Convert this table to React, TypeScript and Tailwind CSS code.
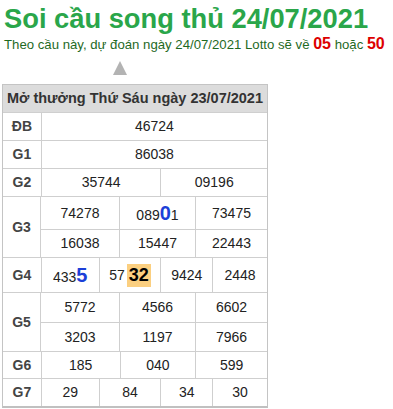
import React from 'react';

const font = { fontFamily: '"Liberation Sans", Arial, sans-serif' };

const Cell: React.FC<{ w: number; children?: React.ReactNode; last?: boolean }> = ({ w, children, last }) => (
    <div
        className={`flex items-center justify-center text-[14px] text-[#222] ${last ? '' : 'border-r border-[#cfcfcf]'}`}
        style={{ width: w }}
    >
        {children}
    </div>
);

const Row: React.FC<{ label: string; h: number; cols: number[]; values: React.ReactNode[] }> = ({ label, h, cols, values }) => (
    <div className="flex border-b border-[#cfcfcf]" style={{ height: h }}>
        <div className="w-[39px] flex items-center justify-center border-r border-[#cfcfcf] font-bold text-[14px] text-[#444]">
            {label}
        </div>
        {values.map((v, i) => (
            <Cell key={i} w={cols[i]} last={i === values.length - 1}>{v}</Cell>
        ))}
    </div>
);

const DoubleRow: React.FC<{ label: string; heights: number[]; cols: number[]; rows: React.ReactNode[][] }> = ({ label, heights, cols, rows }) => (
    <div className="flex border-b border-[#cfcfcf]">
        <div className="w-[39px] flex items-center justify-center border-r border-[#cfcfcf] font-bold text-[14px] text-[#444]">
            {label}
        </div>
        <div className="flex flex-col">
            {rows.map((r, ri) => (
                <div
                    key={ri}
                    className={`flex ${ri === 0 ? 'border-b border-[#cfcfcf]' : ''}`}
                    style={{ height: heights[ri] }}
                >
                    {r.map((v, i) => (
                        <Cell key={i} w={cols[i]} last={i === r.length - 1}>{v}</Cell>
                    ))}
                </div>
            ))}
        </div>
    </div>
);

const three = [79, 76, 71];
const four = [58, 62, 52, 54];

export default function App() {
    return (
        <div className="w-[393px] h-[409px] bg-white overflow-hidden" style={font}>
            <div className="pl-[4px] pt-[3px]">
                <h1 className="text-[27.3px] leading-[31px] font-bold text-[#2aa64a]">Soi cầu song thủ 24/07/2021</h1>
                <p className="text-[13.2px] leading-[18px] text-[#1f6a1f] mt-[1px]">
                    Theo cầu này, dự đoán ngày 24/07/2021 Lotto sẽ về{' '}
                    <b className="text-[16px] text-[#dd0000]">05</b> hoặc{' '}
                    <b className="text-[16px] text-[#dd0000]">50</b>
                </p>
            </div>

            <div className="ml-[113px] mt-[7px] w-0 h-0 border-l-[7px] border-r-[7px] border-b-[14px] border-l-transparent border-r-transparent border-b-[#b3b3b3]" />

            <div className="ml-[2px] mt-[9px] w-[266px] border-l border-t border-r border-[#c4c4c4] border-b-2 border-b-[#c0c0c0]">
                <div className="h-[28px] flex items-center justify-center bg-[#dcdcdc] border-b border-[#cfcfcf] font-bold text-[14.5px] text-[#333]">
                    Mở thưởng Thứ Sáu ngày 23/07/2021
                </div>
                <Row label="ĐB" h={28} cols={[226]} values={['46724']} />
                <Row label="G1" h={28} cols={[226]} values={['86038']} />
                <Row label="G2" h={28} cols={[120, 106]} values={['35744', '09196']} />
                <DoubleRow
                    label="G3"
                    heights={[33, 27]}
                    cols={three}
                    rows={[
                        [
                            '74278',
                            <span key="b" className="flex items-baseline">
                                089<b className="text-[20px] text-[#1c3fd8]">0</b>1
                            </span>,
                            '73475',
                        ],
                        ['16038', '15447', '22443'],
                    ]}
                />
                <Row
                    label="G4"
                    h={35}
                    cols={four}
                    values={[
                        <span key="a" className="flex items-baseline">
                            433<b className="text-[20px] text-[#1c3fd8]">5</b>
                        </span>,
                        <span key="c" className="flex items-center">
                            57
                            <b className="ml-[2px] px-[2px] h-[23px] flex items-center bg-[#fbcf80] text-[18px] text-black">32</b>
                        </span>,
                        '9424',
                        '2448',
                    ]}
                />
                <DoubleRow
                    label="G5"
                    heights={[30, 28]}
                    cols={three}
                    rows={[
                        ['5772', '4566', '6602'],
                        ['3203', '1197', '7966'],
                    ]}
                />
                <Row label="G6" h={27} cols={three} values={['185', '040', '599']} />
                <div className="flex" style={{ height: 27 }}>
                    <div className="w-[39px] flex items-center justify-center border-r border-[#cfcfcf] font-bold text-[14px] text-[#444]">
                        G7
                    </div>
                    {['29', '84', '34', '30'].map((v, i) => (
                        <Cell key={i} w={four[i]} last={i === 3}>{v}</Cell>
                    ))}
                </div>
            </div>
        </div>
    );
}
